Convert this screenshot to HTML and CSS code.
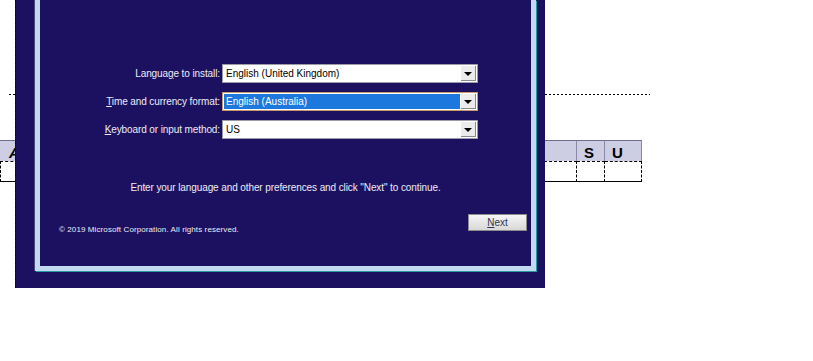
FILE: index.html
```html
<!DOCTYPE html>
<html lang="en">
<head>
    <meta charset="UTF-8">
    <meta name="viewport" content="width=device-width, initial-scale=1.0">
    <title>Windows Setup</title>
    <link rel="stylesheet" href="styles.css">
</head>
<body>
    <div id="sheet">
        <div class="rule"></div>
        <div class="grid">
            <div class="hd col-a">A</div>
            <div class="hd"></div>
            <div class="hd">S</div>
            <div class="hd">U</div>
            <div class="cell first"></div>
            <div class="cell"></div>
            <div class="cell"></div>
            <div class="cell"></div>
        </div>
    </div>

    <div id="setup">
        <div id="frame">
            <div class="form">
                <label>Langua<u>g</u>e to install:</label>
                <div class="combo">
                    <span class="value">English (United Kingdom)</span>
                    <span class="drop"></span>
                </div>
                <label><u>T</u>ime and currency format:</label>
                <div class="combo focused">
                    <span class="value">English (Australia)</span>
                    <span class="drop"></span>
                </div>
                <label><u>K</u>eyboard or input method:</label>
                <div class="combo">
                    <span class="value">US</span>
                    <span class="drop"></span>
                </div>
            </div>

            <div class="hint">Enter your language and other preferences and click "Next" to continue.</div>

            <div class="footer">
                <div class="copyright">© 2019 Microsoft Corporation. All rights reserved.</div>
                <div class="button"><u>N</u>ext</div>
            </div>
        </div>
    </div>
</body>
</html>
```

FILE: styles.css
```css
body {
    margin: 0;
    padding: 0;
    background: #fff;
    font-family: 'Liberation Sans', Arial, sans-serif;
    overflow: hidden;
}

/* spreadsheet behind the dialog */
#sheet {
    padding-top: 94px;
}

.rule {
    margin-left: 9px;
    width: 641px;
    height: 1px;
    background: repeating-linear-gradient(90deg, #000 0 2px, transparent 2px 4px);
}

.grid {
    margin-top: 45px;
    width: 643px;
    display: grid;
    grid-template-columns: 60px 517px 28px 37px;
}

.hd {
    height: 20px;
    background: #cdcde4;
    border-top: 1px solid #6e6e8a;
    border-right: 1px solid #8a8aa6;
    font-size: 15px;
    font-weight: bold;
    line-height: 24px;
    padding-left: 7px;
    overflow: hidden;
}

.hd.col-a {
    padding-left: 9px;
    font-style: italic;
}

.cell {
    height: 19px;
    border-top: 1px dashed #000;
    border-right: 1px dashed #000;
    border-bottom: 1px solid #000;
}

.cell.first {
    border-left: 1px dashed #000;
}

/* setup dialog */
#setup {
    position: absolute;
    left: 15px;
    top: 0;
    width: 530px;
    height: 288px;
    box-sizing: border-box;
    border-left: 1px dotted #000;
    background: #1c1160;
    padding: 0 9px 17px 19px;
    display: flex;
}

#frame {
    flex: 1;
    border: 5px solid #c2d9f1;
    border-top: none;
    box-shadow: -1px 0 0 #4a4a78, 1px 1px 0 #2a9aa2;
    display: flex;
    flex-direction: column;
    color: #ececf4;
    font-size: 10px;
    letter-spacing: -0.1px;
}

.form {
    margin-top: 64px;
    display: grid;
    grid-template-columns: 180px 256px;
    column-gap: 2px;
    row-gap: 9px;
    align-items: center;
}

.form label {
    text-align: right;
    white-space: nowrap;
}

.combo {
    height: 19px;
    box-sizing: border-box;
    border: 1px solid #9c9ca8;
    background: #fff;
    color: #000;
    display: flex;
    align-items: stretch;
    padding: 1px;
    letter-spacing: 0;
}

.combo .value {
    flex: 1;
    padding-left: 2px;
    line-height: 15px;
}

.combo.focused {
    border-color: #c99a6a;
}

.combo.focused .value {
    background: #1c78dc;
    color: #fff;
}

.drop {
    width: 15px;
    margin-left: 1px;
    box-sizing: border-box;
    border-right: 1px solid #8a8a8a;
    border-bottom: 1px solid #8a8a8a;
    background: #ececec;
    display: flex;
    align-items: center;
    justify-content: center;
}

.drop::after {
    content: '';
    border-left: 4px solid transparent;
    border-right: 4px solid transparent;
    border-top: 4px solid #000;
    margin-top: 2px;
}

.hint {
    margin-top: 43px;
    text-align: center;
}

.footer {
    margin-top: auto;
    padding: 0 4px 35px 19px;
    display: flex;
    justify-content: space-between;
    align-items: flex-end;
}

.copyright {
    font-size: 8px;
    letter-spacing: 0.1px;
    margin-bottom: -3px;
}

.button {
    width: 59px;
    height: 17px;
    box-sizing: border-box;
    border: 1px solid #8c8c8c;
    background: linear-gradient(180deg, #f6f6f6 0%, #e6e6e6 50%, #d8d8d8 100%);
    color: #343450;
    text-align: center;
    line-height: 15px;
    letter-spacing: 0;
}
```
